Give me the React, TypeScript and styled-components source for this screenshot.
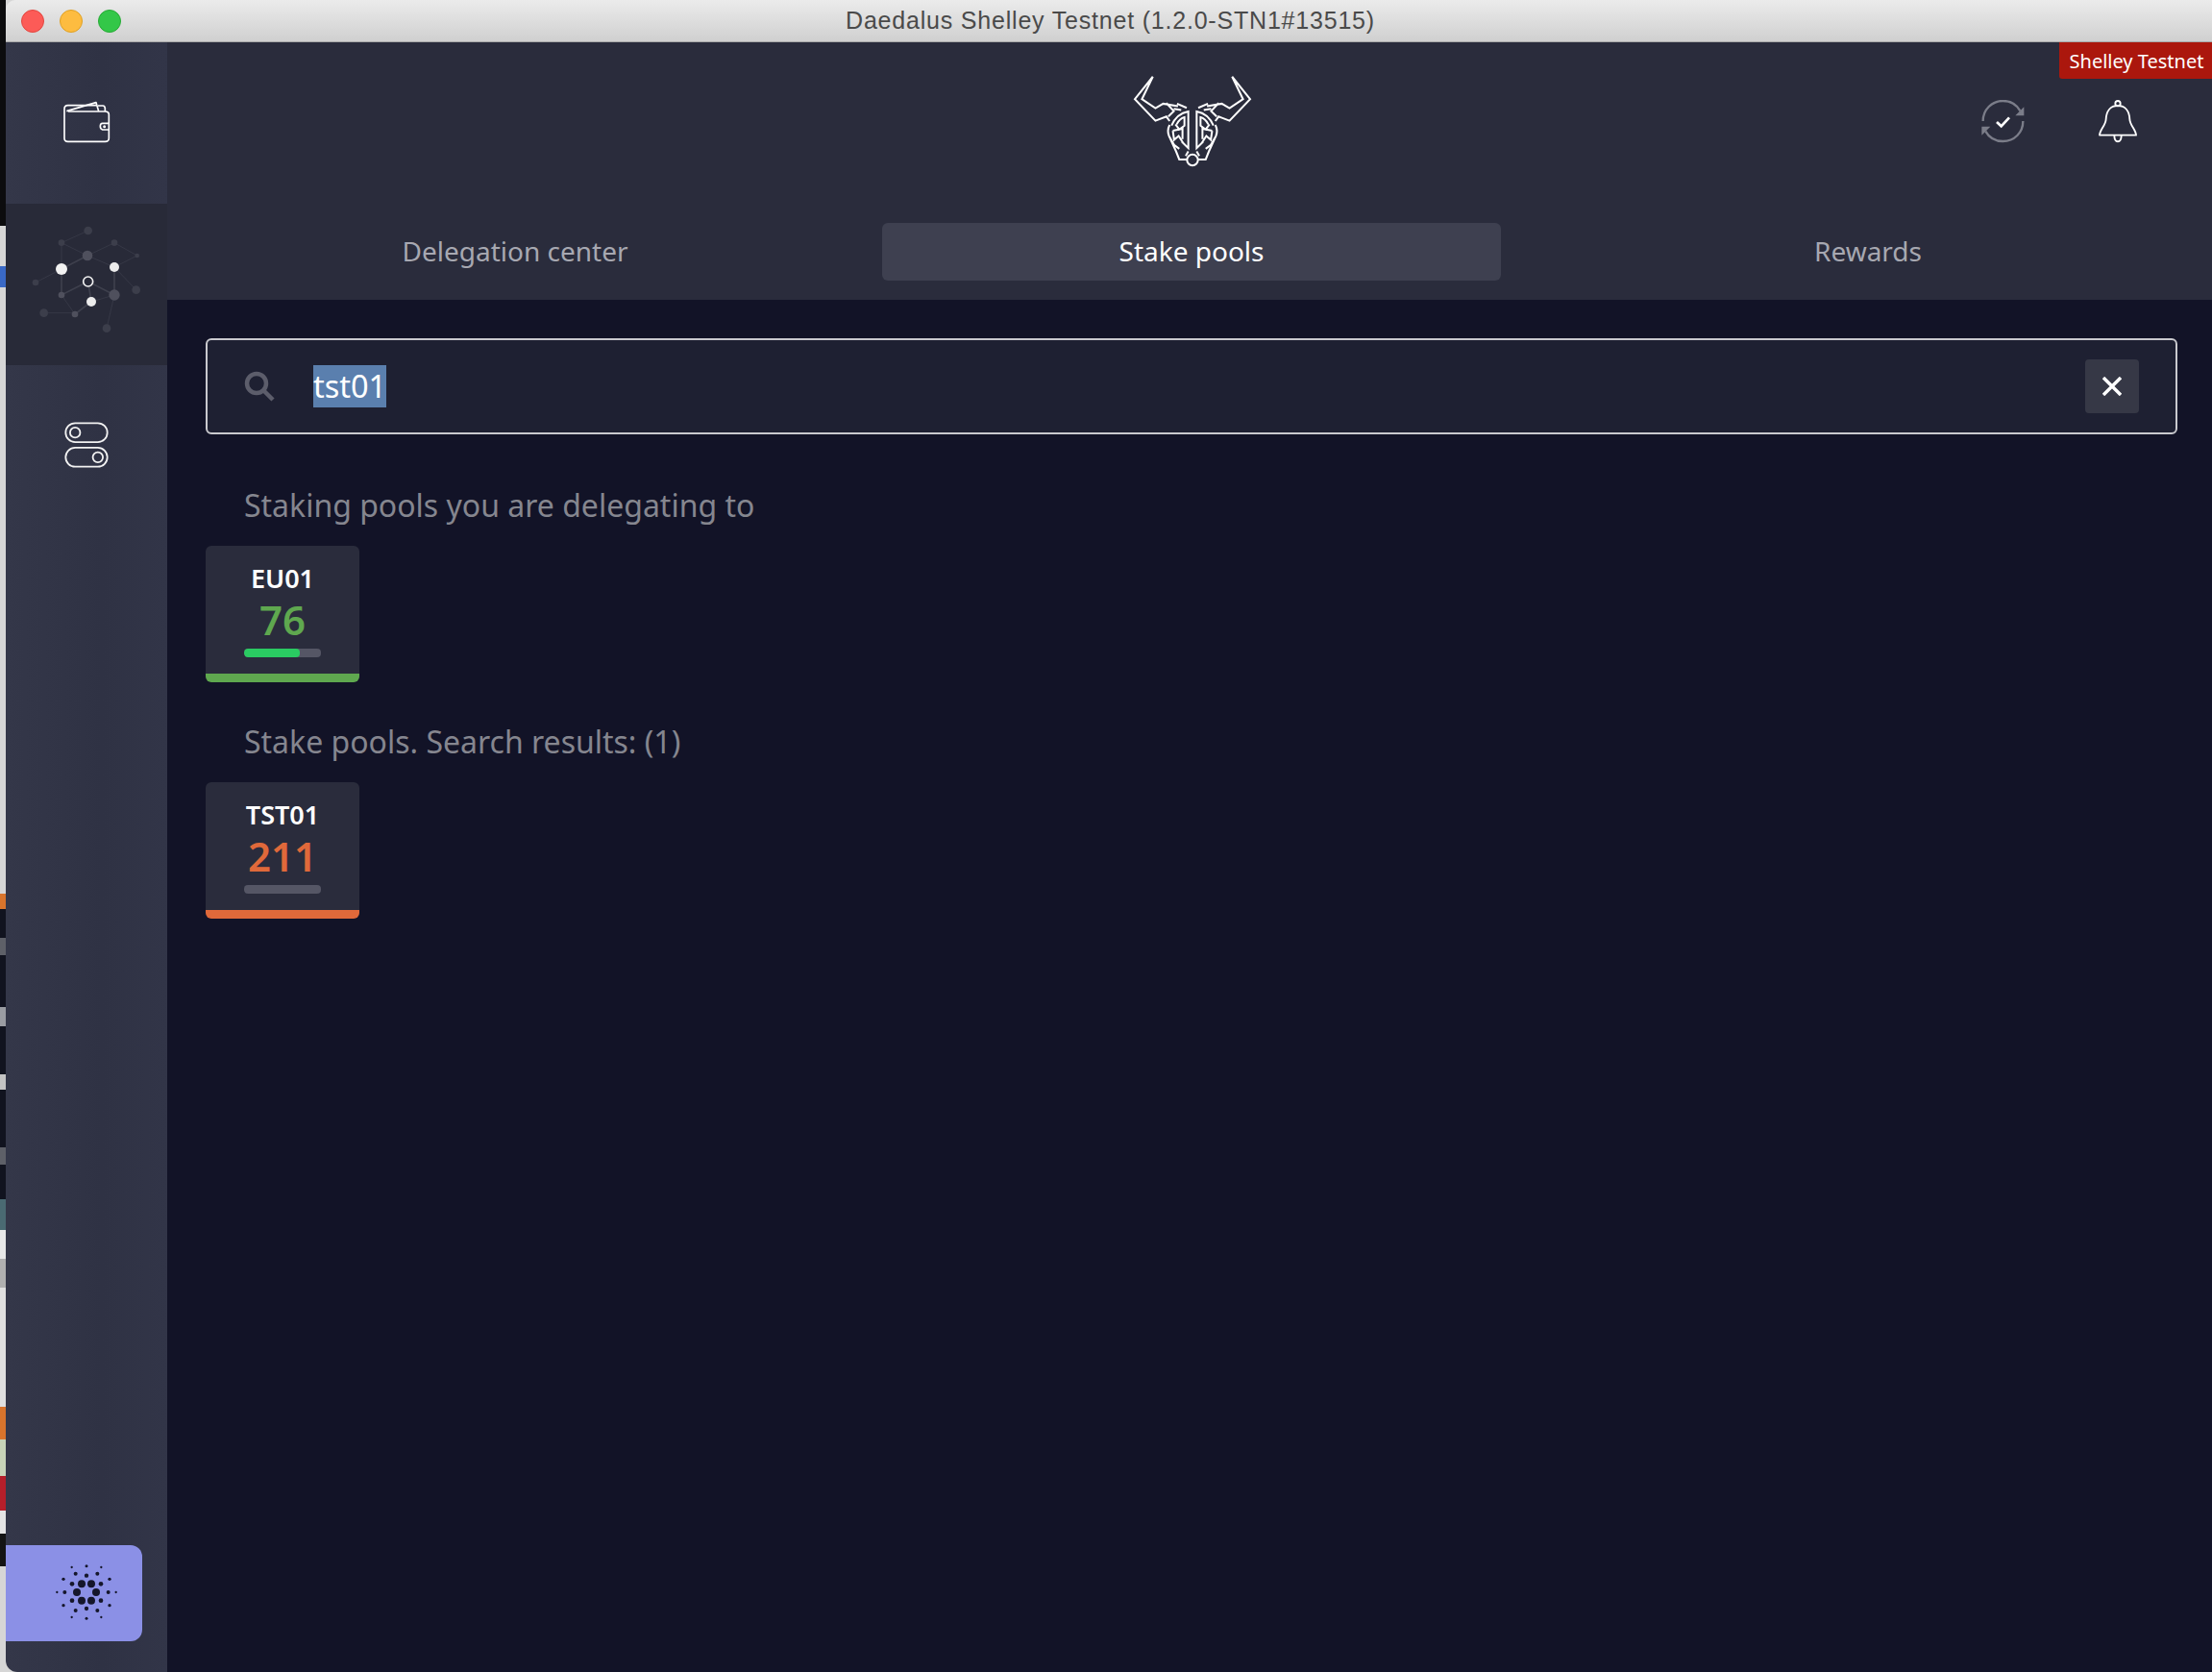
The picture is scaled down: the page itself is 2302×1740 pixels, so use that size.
import React from 'react'
import styled, { createGlobalStyle } from 'styled-components'

const GlobalStyle = createGlobalStyle`
  html, body {
    margin: 0;
    padding: 0;
    height: 1740px;
    overflow: hidden;
    background: #d6d6d6;
  }
  * {
    box-sizing: border-box;
  }
`

const Desktop = styled.div`
  display: flex;
  width: 2302px;
  height: 1740px;
  font-family: 'Noto Sans', sans-serif;
`

const BackdropStrip = styled.div`
  width: 6px;
  display: flex;
  flex-direction: column;
  flex-shrink: 0;
`

const BackdropBand = styled.div<{ $h: number; $c: string }>`
  height: ${p => p.$h}px;
  background: ${p => p.$c};
  flex-shrink: 0;
`

const AppWindow = styled.div`
  flex: 1;
  display: flex;
  flex-direction: column;
  min-width: 0;
  border-radius: 10px 0 0 12px;
  overflow: hidden;
`

const TitleBar = styled.div`
  height: 44px;
  flex-shrink: 0;
  position: relative;
  display: flex;
  align-items: center;
  padding-left: 16px;
  gap: 16px;
  background: linear-gradient(#ebebeb, #d0d0d0);
  border-bottom: 1px solid #a9a9a9;
`

const Light = styled.span<{ $c: string; $b: string }>`
  width: 24px;
  height: 24px;
  border-radius: 50%;
  background: ${p => p.$c};
  border: 1px solid ${p => p.$b};
`

const TitleText = styled.div`
  position: absolute;
  left: 3px;
  right: 0;
  top: 0;
  bottom: 0;
  display: flex;
  justify-content: center;
  align-items: center;
  font-family: 'Liberation Sans', Arial, sans-serif;
  font-size: 25px;
  color: #4a4a4a;
  letter-spacing: 0.8px;
`

const Body = styled.div`
  flex: 1;
  display: flex;
  min-height: 0;
`

const Sidebar = styled.nav`
  width: 168px;
  flex-shrink: 0;
  display: flex;
  flex-direction: column;
  background: linear-gradient(90deg, #343749, #2f3244 60%, #323548);
`

const SideItem = styled.div<{ $active?: boolean }>`
  height: 168px;
  display: flex;
  align-items: center;
  justify-content: center;
  padding-bottom: ${p => (p.$active ? 0 : 3)}px;
  background: ${p => (p.$active ? '#282a38' : 'transparent')};
`

const AdaButton = styled.div`
  margin-top: auto;
  margin-bottom: 32px;
  margin-right: 26px;
  height: 100px;
  padding: 0 0 2px 26px;
  border-radius: 0 12px 12px 0;
  background: #8b90e6;
  display: flex;
  align-items: center;
  justify-content: center;
`

const Main = styled.main`
  flex: 1;
  min-width: 0;
  display: flex;
  flex-direction: column;
  background: #121327;
`

const Header = styled.header`
  position: relative;
  height: 168px;
  flex-shrink: 0;
  padding-bottom: 3px;
  display: grid;
  grid-template-columns: 1fr auto 1fr;
  align-items: center;
  background: #2a2c3c;
`

const HeaderLogo = styled.div`
  grid-column: 2;
  display: flex;
  margin: 0 0 2px 5px;
`

const HeaderActions = styled.div`
  grid-column: 3;
  display: flex;
  justify-content: flex-end;
  align-items: center;
  gap: 77px;
  padding-right: 78px;
`

const NetworkBadge = styled.div`
  position: absolute;
  top: 0;
  right: 0;
  width: 159px;
  height: 38px;
  padding-left: 2px;
  display: flex;
  align-items: center;
  justify-content: center;
  background: #ab170d;
  color: #fff;
  font-size: 20px;
  border-bottom-left-radius: 3px;
`

const Tabs = styled.div`
  height: 100px;
  flex-shrink: 0;
  display: grid;
  grid-template-columns: repeat(3, 644px);
  justify-content: space-between;
  align-items: center;
  padding: 0 36px 0 40px;
  background: #2a2c3c;
`

const Tab = styled.div<{ $active?: boolean }>`
  height: 60px;
  padding-bottom: 2px;
  display: flex;
  align-items: center;
  justify-content: center;
  border-radius: 6px;
  font-size: 28px;
  color: ${p => (p.$active ? '#fff' : '#a7a8b1')};
  background: ${p => (p.$active ? '#3e4050' : 'transparent')};
`

const Content = styled.section`
  flex: 1;
  padding: 40px 36px 0 40px;
  display: flex;
  flex-direction: column;
  align-items: flex-start;
`

const SearchBox = styled.div`
  width: 100%;
  height: 100px;
  display: flex;
  align-items: center;
  padding: 0 38px 0 38px;
  background: #1e2032;
  border: 2px solid #c9c9ce;
  border-radius: 6px;
`

const SearchValue = styled.span`
  margin-left: 40px;
  font-size: 32.5px;
  line-height: 44px;
  color: #fff;
  background: #5a7fae;
`

const ClearButton = styled.div`
  margin-left: auto;
  width: 56px;
  height: 56px;
  border-radius: 4px;
  background: #363846;
  display: flex;
  align-items: center;
  justify-content: center;
`

const SectionTitle = styled.h2<{ $top: number }>`
  margin: ${p => p.$top}px 0 0 40px;
  height: 41px;
  line-height: 41px;
  font-size: 32px;
  font-weight: 400;
  color: #85868f;
`

const PoolCard = styled.div<{ $accent: string }>`
  width: 160px;
  height: 142px;
  margin-top: 22px;
  padding-top: 17px;
  display: flex;
  flex-direction: column;
  align-items: center;
  background: #2a2c3c;
  border-bottom: 9px solid ${p => p.$accent};
  border-radius: 6px;
`

const PoolTicker = styled.div`
  font-size: 27px;
  line-height: 34px;
  font-weight: 600;
  color: #fff;
`

const PoolRank = styled.div<{ $c: string }>`
  margin-top: 1px;
  font-size: 42px;
  line-height: 50px;
  font-weight: 600;
  color: ${p => p.$c};
`

const PoolBar = styled.div`
  width: 80px;
  height: 9px;
  margin-top: 5px;
  border-radius: 4px;
  background: #555665;
  overflow: hidden;
`

const PoolBarFill = styled.div`
  height: 100%;
  border-radius: 4px;
  background: #2acb62;
`

const WalletIcon = () => (
  <svg width="50" height="46" viewBox="195 312 150 132" fill="none" stroke="#fff" strokeWidth="5" strokeLinejoin="round">
    <path d="M213 345h115q12 0 12 10v74q0 10-12 10H212q-11 0-11-10V337q0-11 11-11h90" />
    <path d="M208 344l92-27 8 27M306 327h15q6 0 7 8v10" />
    <path d="M340 382h-20q-7 0-7 9t7 11h20" />
    <circle cx="326" cy="392" r="2" />
  </svg>
)

const faintNodes = [
  [275, 90, 13], [192, 128, 10], [357, 128, 10], [428, 168, 7], [111, 252, 10],
  [425, 275, 13], [137, 347, 13], [333, 395, 13],
]
const midNodes = [[273, 168, 16], [192, 291, 10], [357, 291, 17], [234, 351, 10]]

const StakeIcon = () => (
  <svg width="168" height="168" viewBox="18 6 504 504" fill="none">
    <path
      d="M275 90L192 128V210M192 128L273 168L357 128L428 168L357 204M273 168L357 204L425 275M192 210L111 252M137 347H234M234 351L192 291M357 291L333 395M357 291L285 312"
      stroke="#363846"
      strokeWidth="3"
    />
    <path
      d="M192 210L273 168M192 210V291L275 249L357 291V204M275 249L285 312L234 351"
      stroke="#54556180"
      strokeWidth="5"
    />
    {faintNodes.map(([x, y, r]) => (
      <circle key={`${x}-${y}`} cx={x} cy={y} r={r} fill="#3c3e4b" />
    ))}
    {midNodes.map(([x, y, r]) => (
      <circle key={`${x}-${y}`} cx={x} cy={y} r={r} fill="#4f505d" />
    ))}
    <circle cx="192" cy="210" r="18" fill="#f2f2f2" />
    <circle cx="357" cy="204" r="15" fill="#ececec" />
    <circle cx="285" cy="312" r="15" fill="#ececec" />
    <circle cx="275" cy="249" r="15" fill="#282a38" stroke="#f2f2f2" strokeWidth="5" />
  </svg>
)

const SettingsIcon = () => (
  <svg width="46" height="48" viewBox="200 1313 140 146" fill="none" stroke="#f2f2f2" strokeWidth="5.5">
    <rect x="204" y="1317" width="132" height="60" rx="30" />
    <circle cx="234" cy="1347" r="16" />
    <rect x="204" y="1395" width="132" height="60" rx="30" />
    <circle cx="306" cy="1425" r="16" />
  </svg>
)

const CardanoIcon = () => {
  const dots = [
    [224, 147, 3.5], [270, 143, 4.5], [316, 147, 3.5], [236, 167, 6], [270, 173, 6.5], [304, 167, 6],
    [198, 184, 5], [342, 184, 5], [225, 199, 7], [255, 199, 12], [285, 199, 12], [315, 199, 7],
    [178, 225, 3.5], [202, 225, 6], [240, 225, 12], [300, 225, 12], [338, 225, 6], [362, 225, 3.5],
    [225, 251, 7], [255, 251, 12], [285, 251, 12], [315, 251, 7], [198, 266, 5], [342, 266, 5],
    [236, 282, 6], [270, 276, 6.5], [304, 282, 6], [224, 303, 3.5], [270, 307, 4.5], [316, 303, 3.5],
  ]
  return (
    <svg width="66" height="66" viewBox="171 126 198 198" fill="#15162b">
      {dots.map(([x, y, r]) => (
        <circle key={`${x}-${y}`} cx={x} cy={y} r={r} />
      ))}
    </svg>
  )
}

const DaedalusLogo = () => {
  const half = (
    <g>
      <path d="M180 88L124 158L188 225L222 212L232 226M180 88L146 158L188 186L212 172L258 180M222 170L245 195L228 212M255 172L285 185M245 188L268 192" />
      <path d="M232 238C226 250 226 262 230 272L252 320L262 345H285M238 240C248 216 268 200 290 196V310L270 290M254 236C260 224 270 216 278 214V240L262 252L250 236M242 256L272 250V282M242 256L246 284L260 272L274 294M230 272L246 300L262 312M290 320L282 334" />
    </g>
  )
  return (
    <svg width="124" height="98" viewBox="118 82 370 288" fill="none" stroke="#fff" strokeWidth="6" strokeLinejoin="miter">
      {half}
      <g transform="matrix(-1 0 0 1 606 0)">{half}</g>
      <circle cx="303" cy="347" r="17" />
    </svg>
  )
}

const SyncIcon = () => (
  <svg width="45" height="45" viewBox="185 222 135 135" fill="none">
    <path d="M190 288C190 252 218 225 252 225C276 225 296 238 306 256M315 288C315 324 288 351 252 351C228 351 208 338 198 320" stroke="#7b7d89" strokeWidth="7" />
    <path d="M318 244V271H291ZM186 332V305H213Z" fill="#7b7d89" />
    <path d="M233 291L247 304L272 277" stroke="#fff" strokeWidth="8" />
  </svg>
)

const BellIcon = () => (
  <svg width="40" height="45" viewBox="552 222 120 135" fill="none" stroke="#fff" strokeWidth="5.5" strokeLinejoin="round">
    <circle cx="612" cy="233" r="8" />
    <path d="M612 240C588 240 576 258 575 282C574 302 556 314 555 332H669C668 314 650 302 649 282C648 258 636 240 612 240Z" />
    <path d="M601 333C601 358 623 358 623 333" />
  </svg>
)

const SearchIcon = () => (
  <svg width="32" height="32" viewBox="0 0 32 32" fill="none" stroke="#5c5d6b" strokeWidth="4.5">
    <circle cx="13" cy="13" r="10" />
    <path d="M20 20L30 30" />
  </svg>
)

const CloseIcon = () => (
  <svg width="20" height="20" viewBox="0 0 20 20" stroke="#fff" strokeWidth="3.4">
    <path d="M1 1L19 19M19 1L1 19" />
  </svg>
)

const backdrop: [number, string][] = [
  [235, '#0c0c0e'], [42, '#d6d6d6'], [22, '#3a69c6'], [631, '#d6d6d6'], [16, '#d8742c'], [30, '#11131f'],
  [18, '#5e6068'], [54, '#11131f'], [20, '#9a9ca2'], [50, '#11131f'], [16, '#c4c4c4'], [60, '#11131f'],
  [18, '#5e6068'], [36, '#11131f'], [32, '#4a6a72'], [30, '#e8e8e8'], [30, '#b0b0b0'], [124, '#e0e0e0'],
  [34, '#d8742c'], [38, '#c8d4b8'], [36, '#b51f2a'], [24, '#e4e4e4'], [34, '#141414'],
]

const App = () => (
  <>
    <GlobalStyle />
    <Desktop>
      <BackdropStrip>
        {backdrop.map(([h, c], i) => (
          <BackdropBand key={i} $h={h} $c={c} />
        ))}
      </BackdropStrip>
      <AppWindow>
        <TitleBar>
          <Light $c="#fc5b57" $b="#e2463f" />
          <Light $c="#fdbc40" $b="#dfa023" />
          <Light $c="#33c748" $b="#27aa35" />
          <TitleText>Daedalus Shelley Testnet (1.2.0-STN1#13515)</TitleText>
        </TitleBar>
        <Body>
          <Sidebar>
            <SideItem>
              <WalletIcon />
            </SideItem>
            <SideItem $active>
              <StakeIcon />
            </SideItem>
            <SideItem>
              <SettingsIcon />
            </SideItem>
            <AdaButton>
              <CardanoIcon />
            </AdaButton>
          </Sidebar>
          <Main>
            <Header>
              <HeaderLogo>
                <DaedalusLogo />
              </HeaderLogo>
              <HeaderActions>
                <SyncIcon />
                <BellIcon />
              </HeaderActions>
              <NetworkBadge>Shelley Testnet</NetworkBadge>
            </Header>
            <Tabs>
              <Tab>Delegation center</Tab>
              <Tab $active>Stake pools</Tab>
              <Tab>Rewards</Tab>
            </Tabs>
            <Content>
              <SearchBox>
                <SearchIcon />
                <SearchValue>tst01</SearchValue>
                <ClearButton>
                  <CloseIcon />
                </ClearButton>
              </SearchBox>
              <SectionTitle $top={53}>Staking pools you are delegating to</SectionTitle>
              <PoolCard $accent="#5fa84f">
                <PoolTicker>EU01</PoolTicker>
                <PoolRank $c="#5fa84f">76</PoolRank>
                <PoolBar>
                  <PoolBarFill style={{ width: '72%' }} />
                </PoolBar>
              </PoolCard>
              <SectionTitle $top={41}>Stake pools. Search results: (1)</SectionTitle>
              <PoolCard $accent="#e0693a">
                <PoolTicker>TST01</PoolTicker>
                <PoolRank $c="#e0693a">211</PoolRank>
                <PoolBar />
              </PoolCard>
            </Content>
          </Main>
        </Body>
      </AppWindow>
    </Desktop>
  </>
)

export default App
